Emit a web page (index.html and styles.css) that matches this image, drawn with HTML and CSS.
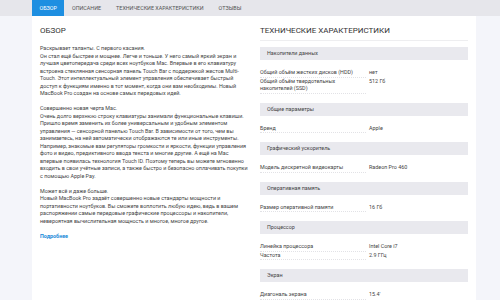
FILE: index.html
```html
<!DOCTYPE html>
<html lang="ru">
<head>
<meta charset="utf-8">
<title>Обзор</title>
<link rel="stylesheet" href="styles.css">
</head>
<body>
<nav class="tabs">
  <a class="tab tab--active">Обзор</a>
  <a class="tab">Описание</a>
  <a class="tab">Технические характеристики</a>
  <a class="tab">Отзывы</a>
</nav>
<main class="panel">
  <section class="overview">
    <h2 class="title">Обзор</h2>
    <p class="para">Раскрывает таланты. С первого касания.<br>Он стал ещё быстрее и мощнее. Легче и тоньше. У него самый яркий экран и лучшая цветопередача среди всех ноутбуков Mac. Впервые в его клавиатуру встроена стеклянная сенсорная панель Touch Bar с поддержкой жестов Multi-Touch. Этот интеллектуальный элемент управления обеспечивает быстрый доступ к функциям именно в тот момент, когда они вам необходимы. Новый MacBook Pro создан на основе самых передовых идей.</p>
    <p class="para">Совершенно новая черта Mac.<br>Очень долго верхнюю строку клавиатуры занимали функциональные клавиши. Пришло время заменить их более универсальным и удобным элементом управления — сенсорной панелью Touch Bar. В зависимости от того, чем вы занимаетесь, на ней автоматически отображаются те или иные инструменты. Например, знакомые вам регуляторы громкости и яркости, функции управления фото и видео, предиктивного ввода текста и многие другие. А ещё на Mac впервые появилась технология Touch ID. Поэтому теперь вы можете мгновенно входить в свои учётные записи, а также быстро и безопасно оплачивать покупки с помощью Apple Pay.</p>
    <p class="para">Может всё и даже больше.<br>Новый MacBook Pro задаёт совершенно новые стандарты мощности и портативности ноутбуков. Вы сможете воплотить любую идею, ведь в вашем распоряжении самые передовые графические процессоры и накопители, невероятная вычислительная мощность и многое, многое другое.</p>
    <a class="more">Подробнее</a>
  </section>
  <section class="specs">
    <h2 class="title title--ruled">Технические характеристики</h2>
    <div class="group">
      <div class="group-name">Накопители данных</div>
      <div class="row"><span class="label">Общий объём жестких дисков (HDD)</span><span class="value">нет</span></div>
      <div class="row"><span class="label">Общий объём твердотельных накопителей (SSD)</span><span class="value">512 Гб</span></div>
    </div>
    <div class="group">
      <div class="group-name">Общие параметры</div>
      <div class="row"><span class="label">Бренд</span><span class="value">Apple</span></div>
    </div>
    <div class="group">
      <div class="group-name">Графический ускоритель</div>
      <div class="row"><span class="label">Модель дискретной видеокарты</span><span class="value">Radeon Pro 460</span></div>
    </div>
    <div class="group">
      <div class="group-name">Оперативная память</div>
      <div class="row"><span class="label">Размер оперативной памяти</span><span class="value">16 Гб</span></div>
    </div>
    <div class="group">
      <div class="group-name">Процессор</div>
      <div class="row"><span class="label">Линейка процессора</span><span class="value">Intel Core i7</span></div>
      <div class="row"><span class="label">Частота</span><span class="value">2.9 ГГц</span></div>
    </div>
    <div class="group">
      <div class="group-name">Экран</div>
      <div class="row"><span class="label">Диагональ экрана</span><span class="value">15.4'</span></div>
    </div>
  </section>
</main>
</body>
</html>
```
FILE: styles.css
```css
html, body {
  margin: 0;
  padding: 0;
}
body {
  background: #f4f5fa;
  font-family: Roboto, "Liberation Sans", sans-serif;
  color: #444;
  height: 300px;
  overflow: hidden;
}
.tabs {
  display: flex;
  height: 16px;
  background: #e6e6eb;
  padding-left: 32px;
}
.tab {
  display: block;
  padding: 0 7.5px;
  line-height: 16px;
  font-size: 5.4px;
  text-transform: uppercase;
  color: #555;
}
.tab--active {
  background: #1e8fe1;
  color: #fff;
}
.panel {
  margin-left: 32px;
  width: 444px;
  box-sizing: border-box;
  padding: 10px 8px 0;
  background: #fff;
  min-height: 284px;
  display: grid;
  grid-template-columns: 210px 208px;
  column-gap: 10px;
  align-items: start;
}
.title {
  margin: 0 0 4px;
  padding-bottom: 4px;
  font-size: 8px;
  line-height: 10px;
  font-weight: 400;
  text-transform: uppercase;
  color: #333;
  border-bottom: 1px solid transparent;
}
.title--ruled {
  border-bottom-color: #eeeef0;
  margin-bottom: 6px;
}
.para {
  margin: 0 0 7.5px;
  font-size: 5.4px;
  line-height: 7.5px;
  color: #444;
}
.more {
  display: block;
  margin-top: 8px;
  font-size: 5.4px;
  line-height: 7.5px;
  font-weight: 700;
  color: #1a8ad8;
}
.group {
  margin-bottom: 9px;
}
.group-name {
  height: 13px;
  line-height: 13px;
  padding-left: 7px;
  background: #e9e9ee;
  font-size: 5.4px;
  color: #444;
  margin-bottom: 9px;
}
.row {
  display: grid;
  grid-template-columns: 106px 1fr;
  column-gap: 3px;
  font-size: 5.4px;
  line-height: 7.5px;
  color: #444;
}
.label {
  border-bottom: 1px dotted #e2e2e6;
}
.value {
  color: #444;
}
```
